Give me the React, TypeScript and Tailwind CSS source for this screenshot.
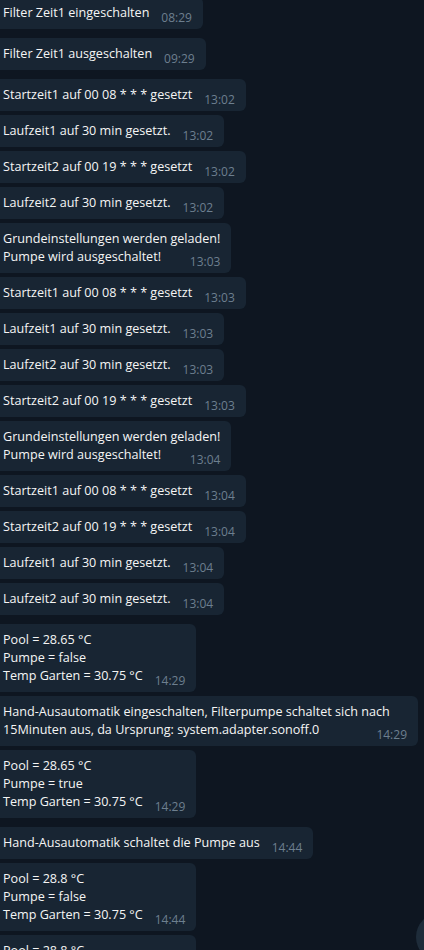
type Msg = { text: string; time: string; gap: 'sm' | 'lg'; wide?: boolean };

const messages: Msg[] = [
  { text: 'Filter Zeit1 eingeschalten', time: '08:29', gap: 'sm' },
  { text: 'Filter Zeit1 ausgeschalten', time: '09:29', gap: 'lg' },
  { text: 'Startzeit1 auf 00 08 * * * gesetzt', time: '13:02', gap: 'lg' },
  { text: 'Laufzeit1 auf 30 min gesetzt.', time: '13:02', gap: 'sm' },
  { text: 'Startzeit2 auf 00 19 * * * gesetzt', time: '13:02', gap: 'sm' },
  { text: 'Laufzeit2 auf 30 min gesetzt.', time: '13:02', gap: 'sm' },
  { text: 'Grundeinstellungen werden geladen!\nPumpe wird ausgeschaltet!', time: '13:03', gap: 'sm' },
  { text: 'Startzeit1 auf 00 08 * * * gesetzt', time: '13:03', gap: 'sm' },
  { text: 'Laufzeit1 auf 30 min gesetzt.', time: '13:03', gap: 'sm' },
  { text: 'Laufzeit2 auf 30 min gesetzt.', time: '13:03', gap: 'sm' },
  { text: 'Startzeit2 auf 00 19 * * * gesetzt', time: '13:03', gap: 'sm' },
  { text: 'Grundeinstellungen werden geladen!\nPumpe wird ausgeschaltet!', time: '13:04', gap: 'sm' },
  { text: 'Startzeit1 auf 00 08 * * * gesetzt', time: '13:04', gap: 'sm' },
  { text: 'Startzeit2 auf 00 19 * * * gesetzt', time: '13:04', gap: 'sm' },
  { text: 'Laufzeit1 auf 30 min gesetzt.', time: '13:04', gap: 'sm' },
  { text: 'Laufzeit2 auf 30 min gesetzt.', time: '13:04', gap: 'sm' },
  { text: 'Pool = 28.65 °C\nPumpe = false\nTemp Garten = 30.75 °C', time: '14:29', gap: 'lg' },
  {
    text: 'Hand-Ausautomatik eingeschalten, Filterpumpe schaltet sich nach\n15Minuten aus, da Ursprung: system.adapter.sonoff.0',
    time: '14:29',
    gap: 'sm',
    wide: true,
  },
  { text: 'Pool = 28.65 °C\nPumpe = true\nTemp Garten = 30.75 °C', time: '14:29', gap: 'sm' },
  { text: 'Hand-Ausautomatik schaltet die Pumpe aus', time: '14:44', gap: 'lg' },
  { text: 'Pool = 28.8 °C\nPumpe = false\nTemp Garten = 30.75 °C', time: '14:44', gap: 'sm' },
  { text: 'Pool = 28.8 °C\nPumpe = false\nTemp Garten = 30.75 °C', time: '14:44', gap: 'sm' },
];

function Bubble({ msg, first }: { msg: Msg; first: boolean }) {
  const lines = msg.text.split('\n');
  const last = lines.pop();
  return (
    <div
      className={[
        'rounded-[6px] bg-[#182533] pl-[11px] pr-[11px] py-[7px] text-[12.6px] leading-[18px] text-[#f5f5f5]',
        msg.wide ? 'w-[426px]' : 'w-fit',
        first ? '-mt-[3px]' : msg.gap === 'lg' ? 'mt-[9px]' : 'mt-[4px]',
      ].join(' ')}
    >
      {lines.map((l, i) => (
        <div key={i} className="whitespace-nowrap">
          {l}
        </div>
      ))}
      <div className="whitespace-nowrap">
        <span>{last}</span>
        {/* time floats to the right end of the last line, a bit lower */}
        <span className="relative top-[5px] float-right ml-[12px] text-[12px] leading-[18px] text-[#6d7f8f]">
          {msg.time}
        </span>
      </div>
    </div>
  );
}

export default function App() {
  return (
    <div
      className="relative h-[950px] w-[424px] overflow-hidden bg-[#0e1621]"
      style={{ fontFamily: '"Open Sans", "Noto Sans", sans-serif' }}
    >
      <div className="-ml-[8px] flex flex-col items-start">
        {messages.map((m, i) => (
          <Bubble key={i} msg={m} first={i === 0} />
        ))}
      </div>

      {/* scroll-to-bottom button, mostly off screen */}
      <div className="absolute left-[416px] top-[913px] h-[48px] w-[48px] rounded-full bg-[#1e2c3a]" />
    </div>
  );
}
